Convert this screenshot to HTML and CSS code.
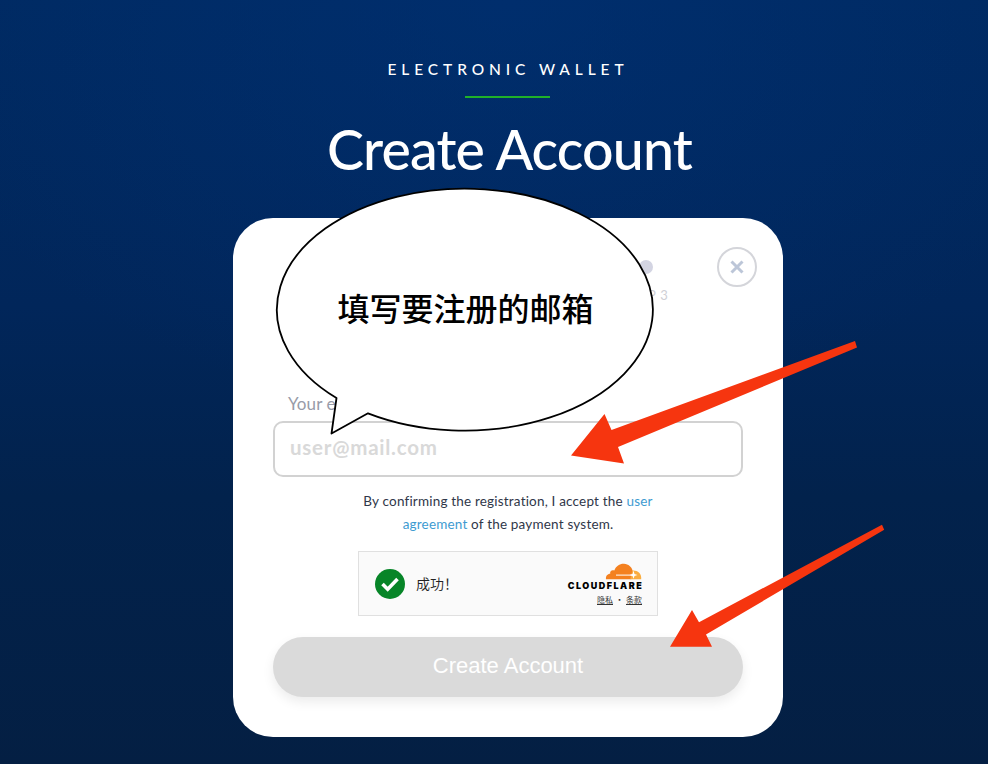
FILE: index.html
```
<!DOCTYPE html>
<html lang="en">
<head>
<meta charset="utf-8">
<title>Create Account</title>
<link rel="stylesheet" href="styles.css">
</head>
<body>
<main class="page">
  <header class="intro">
    <p class="eyebrow"><span>ELECTRONIC WALLET</span></p>
    <hr class="rule">
    <h1 class="title"><span>Create Account</span></h1>
  </header>
  <form class="card">
    <div class="card-top">
      <div class="step"><i class="dot"></i><span>STEP 3</span></div>
      <button type="button" class="close" aria-label="Close">
        <svg width="14" height="14" viewBox="0 0 14 14"><path d="M1.500 1.500l11 11M12.500 1.500l-11 11" stroke="#bcc6d8" stroke-width="3" fill="none"/></svg>
      </button>
    </div>
    <label class="label" for="email"><span>Your email</span></label>
    <div class="field" id="email"><span>user@mail.com</span></div>
    <p class="terms"><span class="t1">By confirming the registration, I accept the <a>user</a></span><br><span class="t2"><a>agreement</a> of the payment system.</span></p>
    <div class="check">
      <svg class="tick" width="30" height="30" viewBox="0 0 30 30"><circle cx="15" cy="15" r="15" fill="#078528"/><path d="M7.500 15l5.200 5.200 9.800-10.200" fill="none" stroke="#fff" stroke-width="3.600"/></svg>
      <span class="ok">成功！</span>
      <div class="brand">
        <svg class="cloud" width="37" height="17" viewBox="0 0 37 17"><path d="M1 16.2C.5 12.800 2.600 10.800 5.200 10.700 4.600 8 7.200 6.300 9.300 7.600 11 2.700 15 .5 19 .7c4.500.2 7.700 3.300 8.700 7l-1.500 8.500z" fill="#f48120"/><path d="M25.300 16.200l2-8.600c5-.5 9.500 3 8.900 8.600z" fill="#faad3f"/><path d="M11 12.100h18" stroke="#fff" stroke-width="1"/><path d="M28.500 7.500l1 3.500 3 1-3 1-1 2.800-1-2.800-3-1 3-1z" fill="#fff"/></svg>
        <span class="name">CLOUDFLARE</span>
        <span class="links"><u>隐私</u><b>•</b><u>条款</u></span>
      </div>
    </div>
    <button type="button" class="submit"><span>Create Account</span></button>
  </form>
</main>
<svg class="notes" width="988" height="764" viewBox="0 0 988 764">
  <path d="M336.500 398A188 121 0 1 1 368 413.300L331.500 433.500Z" fill="#fff" stroke="#000" stroke-width="1.800" stroke-linejoin="round"/>
  <path d="M571 455.500L604.500 414l7 16L855 341l2 6.500L618 447l6 16.500z" fill="#f6350f"/>
  <path d="M670 646.800L692 610l7 12.200L882 524.800l2.200 5L706 634.500l6 12.300z" fill="#f6350f"/>
  <text class="note" x="337.500" y="320.500">填写要注册的邮箱</text>
</svg>
</body>
</html>
```
FILE: styles.css
```
* { box-sizing: border-box; }
body {
  margin: 0;
  height: 764px;
  overflow: hidden;
  position: relative;
  font-family: Lato, "Noto Sans CJK SC", sans-serif;
  background:
    radial-gradient(ellipse 620px 420px at 508px 0, rgba(0, 50, 120, .5), rgba(0, 50, 120, 0)),
    linear-gradient(#002a62, #01265a 40%, #02224c 65%, #041f43);
}
p, h1, hr { margin: 0; }
.page { width: 550px; margin-left: 233px; padding-top: 59px; }
.intro { height: 159px; display: flex; flex-direction: column; align-items: center; color: #fff; }
.eyebrow { font-size: 15.5px; line-height: 20px; font-weight: 500; letter-spacing: 4.9px; white-space: nowrap; }
.rule { width: 85px; height: 2px; margin-top: 17px; margin-right: 1px; border: 0; background: #1fb129; }
.title { margin-top: 16px; padding-left: 3px; font-size: 55.5px; line-height: 70px; font-weight: 500; letter-spacing: -.85px; white-space: nowrap; }
.card { height: 519px; padding: 29px 40px 40px; border-radius: 40px; background: #fff; }
.card-top { display: flex; justify-content: flex-end; height: 145px; margin-right: -14px; }
.step { width: 46px; margin-right: 48px; padding-top: 13px; display: flex; flex-direction: column; align-items: center; font-size: 13px; line-height: 15px; color: #cfd0d6; white-space: nowrap; letter-spacing: .8px; }
.dot { width: 14px; height: 14px; margin-bottom: 14px; border-radius: 50%; background: #d3d4e2; }
.close { width: 40px; height: 40px; padding: 0; display: flex; align-items: center; justify-content: center; border: 2px solid #d4d5da; border-radius: 50%; background: #fff; }
.label { display: block; height: 29px; padding-left: 15px; font-size: 17px; line-height: 24px; letter-spacing: .1px; color: #989ba8; }
.field { height: 56px; padding-left: 15px; border: 2px solid #d2d2d2; border-radius: 10px; font-size: 20.5px; line-height: 49px; font-weight: 700; letter-spacing: .75px; color: #d9d9d9; }
.terms { height: 74px; padding-top: 13px; text-align: center; font-size: 13.5px; line-height: 23px; letter-spacing: .19px; color: #303749; white-space: nowrap; }
.terms a { color: #3d9bd1; }
.check { width: 300px; height: 65px; margin: 0 auto; padding: 2px 15px 0 16px; display: flex; align-items: center; border: 1px solid #e0e0e0; background: #fafafa; }
.tick { margin-top: -2px; }
.ok { margin: -4px 0 0 11px; font-family: "Noto Sans CJK SC", sans-serif; font-size: 14px; color: #232323; font-weight: 350; }
.brand { margin-left: auto; display: flex; flex-direction: column; align-items: flex-end; }
.cloud { display: block; }
.name { font: 900 9px/12px Inter, sans-serif; letter-spacing: 1.5px; margin-right: -1.3px; color: #000; }
.links { display: flex; font-family: "Noto Sans CJK SC", sans-serif; font-size: 8px; line-height: 15px; color: #333; }
.links b { padding: 0 3px; font-size: 7px; }
.submit { width: 470px; height: 60px; margin-top: 21px; padding: 0 0 3px; border: 0; border-radius: 30px; background: #dadada; box-shadow: 0 5px 12px rgba(0, 0, 0, .08); color: #fff; font: 22px "Liberation Sans", sans-serif; }
.notes { position: absolute; left: 0; top: 0; }
.note { font: 500 32px "Noto Sans CJK SC", sans-serif; }
```
